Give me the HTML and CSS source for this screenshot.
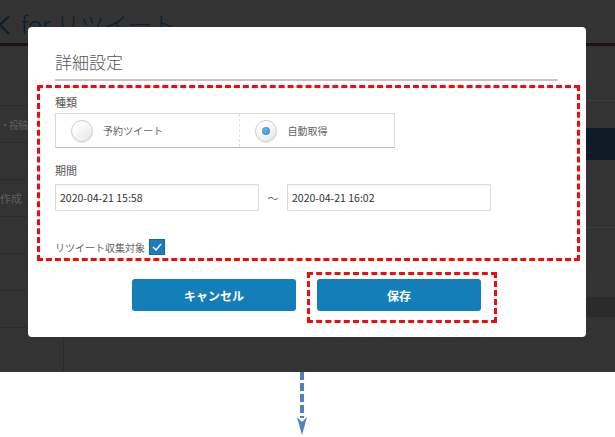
FILE: index.html
```html
<!DOCTYPE html>
<html lang="ja">
  <head>
    <meta charset="UTF-8" />
    <meta name="viewport" content="width=device-width, initial-scale=1.0" />
    <title>詳細設定</title>
    <link rel="stylesheet" href="styles.css">
  </head>
  <body>
    <!-- screen behind the dialog -->
    <div class="screen">
      <header class="app-header">
        <svg class="back-icon" width="12" height="24" viewBox="0 0 12 24">
          <polyline points="10,4 1,13 10,22" fill="none" stroke="#0b1f30" stroke-width="2" />
        </svg>
        <span class="app-title">for リツイート</span>
      </header>
      <div class="app-body">
        <ul class="side-menu">
          <li class="side-item side-item-first"></li>
          <li class="side-item side-item-post">・投稿</li>
          <li class="side-item"></li>
          <li class="side-item">作成</li>
          <li class="side-item"></li>
          <li class="side-item"></li>
          <li class="side-item"></li>
        </ul>
        <div class="main">
          <div class="main-row main-row-top"></div>
          <div class="main-row main-row-sub"></div>
          <div class="main-row main-row-active"></div>
          <div class="main-row main-row-list"></div>
          <div class="main-row main-row-foot"></div>
        </div>
      </div>

      <!-- dialog -->
      <div class="modal">
        <h2 class="modal-title">詳細設定</h2>

        <section class="mark-box">
          <p class="field-label">種類</p>
          <div class="radio-group">
            <label class="radio-cell radio-cell-first">
              <span class="radio"></span>
              <span class="radio-text">予約ツイート</span>
            </label>
            <label class="radio-cell">
              <span class="radio radio-on"></span>
              <span class="radio-text">自動取得</span>
            </label>
          </div>

          <p class="field-label field-label-period">期間</p>
          <div class="period">
            <input class="date-input" type="text" value="2020-04-21 15:58" readonly />
            <span class="tilde">〜</span>
            <input class="date-input" type="text" value="2020-04-21 16:02" readonly />
          </div>

          <div class="check-row">
            <span class="check-text">リツイート収集対象</span>
            <span class="checkbox">
              <svg width="10" height="8" viewBox="0 0 10 8">
                <polyline points="1,4 4,7 9,1" fill="none" stroke="#fff" stroke-width="1.4" />
              </svg>
            </span>
          </div>
        </section>

        <div class="modal-buttons">
          <button class="btn btn-cancel">キャンセル</button>
          <div class="mark-save">
            <button class="btn">保存</button>
          </div>
        </div>
      </div>
    </div>

    <!-- arrow under the screenshot -->
    <div class="below">
      <svg class="down-arrow" width="14" height="65" viewBox="0 0 14 65">
        <line x1="7" y1="0" x2="7" y2="46" stroke="#4f81bd" stroke-width="4" stroke-dasharray="8 3" />
        <polygon points="2,45 7,50 12,45 7,63" fill="#4f81bd" />
      </svg>
    </div>
  </body>
</html>
```

FILE: styles.css
```css
/*global*/
* {
  margin: 0;
  padding: 0;
  box-sizing: border-box;
}

body {
  width: 615px;
  font-family: "Noto Sans CJK JP", "Noto Sans", sans-serif;
  background-color: #fff;
}

ul {
  list-style: none;
}

/*screen*/
.screen {
  position: relative;
  height: 372px;
  background-color: #333;
  overflow: hidden;
}

.app-header {
  height: 46px;
  display: flex;
  align-items: center;
  border-bottom: 3px solid #1c1212;
  padding-top: 4px;
  color: #0b1f30;
}

.back-icon {
  margin-left: -1px;
}

.app-title {
  margin-left: 10px;
  font-size: 24px;
  font-weight: 300;
  white-space: nowrap;
}

.app-body {
  display: flex;
  height: 326px;
}

.side-menu {
  width: 64px;
  border-right: 1px solid #2a2a2a;
  overflow: hidden;
}

.side-item {
  height: 37px;
  border-bottom: 1px solid #2c2c2c;
  display: flex;
  align-items: center;
  white-space: nowrap;
  font-size: 11px;
  color: #5e5e5e;
}

.side-item-first {
  height: 60px;
}

.side-item-post {
  font-size: 10px;
  letter-spacing: -1px;
}

.main {
  flex: 1;
}

.main-row {
  border-bottom: 1px solid #3c3c3c;
}

.main-row-top {
  height: 55px;
}

.main-row-sub {
  height: 27px;
  border-bottom: none;
}

.main-row-active {
  height: 32px;
  background-color: #0e1c28;
  border-bottom: none;
}

.main-row-list {
  height: 68px;
}

.main-row-foot {
  height: 89px;
  border-bottom: 20px solid #2b2b2b;
}

/*modal*/
.modal {
  position: absolute;
  left: 28px;
  top: 27px;
  width: 558px;
  height: 310px;
  background-color: #fff;
  border-radius: 4px;
}

.modal-title {
  margin: 0 28px 0 27px;
  padding-top: 23px;
  padding-bottom: 5px;
  line-height: 24px;
  font-size: 17px;
  font-weight: 300;
  color: #555;
  border-bottom: 2px solid #c6c6c6;
}

/*red marks*/
.mark-box {
  margin: 4px 6px 0 9px;
  height: 176px;
  border: 3px dashed #f40a0a;
  padding: 6px 0 0 15px;
}

.mark-save {
  border: 3px dashed #f40a0a;
  padding: 4px 13px 9px 7px;
}

/*form*/
.field-label {
  font-size: 11px;
  line-height: 16px;
  color: #555;
}

.radio-group {
  margin-top: 3px;
  width: 340px;
  height: 35px;
  display: flex;
  border: 1px solid #dadada;
  border-bottom-color: #bcbcbc;
}

.radio-cell {
  display: flex;
  align-items: center;
  padding-left: 15px;
  width: 154px;
}

.radio-cell-first {
  width: 185px;
  border-right: 1px dashed #e2e2e2;
}

.radio {
  width: 22px;
  height: 22px;
  border-radius: 50%;
  border: 1px solid #cfcfcf;
  background: linear-gradient(135deg, #fff 20%, #e4e4e4 100%);
  box-shadow: 0 1px 1px rgba(0, 0, 0, 0.08);
  display: flex;
  align-items: center;
  justify-content: center;
}

.radio-on::after {
  content: "";
  width: 8px;
  height: 8px;
  border-radius: 50%;
  background: radial-gradient(circle at 40% 35%, #6db4e8, #2b85cc);
}

.radio-text {
  margin-left: 10px;
  font-size: 10px;
  color: #666;
}

.field-label-period {
  margin-top: 14px;
}

.period {
  margin-top: 6px;
  display: flex;
  align-items: center;
}

.date-input {
  width: 204px;
  height: 27px;
  border: 1px solid #dcdcdc;
  box-shadow: inset 0 1px 2px rgba(0, 0, 0, 0.06);
  padding-left: 4px;
  font-family: "Noto Sans CJK JP", "Noto Sans", sans-serif;
  font-size: 10.5px;
  color: #333;
  outline: none;
}

.tilde {
  width: 28px;
  text-align: center;
  font-size: 11px;
  color: #666;
}

.check-row {
  margin-top: 28px;
  display: flex;
  align-items: center;
}

.check-text {
  font-size: 10px;
  color: #666;
}

.checkbox {
  margin-left: 4px;
  width: 16px;
  height: 16px;
  background-color: #1b7dbd;
  border: 1px solid #15679c;
  display: flex;
  align-items: center;
  justify-content: center;
}

/*buttons*/
.modal-buttons {
  margin: 11px 0 0 104px;
  display: flex;
  align-items: flex-start;
}

.btn {
  width: 164px;
  height: 32px;
  border: none;
  border-radius: 3px;
  background-color: #147eb9;
  color: #fff;
  font-family: "Noto Sans CJK JP", "Noto Sans", sans-serif;
  font-size: 12px;
  font-weight: 700;
}

.btn-cancel {
  margin-top: 7px;
  margin-right: 11px;
}

/*below*/
.below {
  height: 65px;
  padding-left: 295px;
}

.down-arrow {
  display: block;
}
```
